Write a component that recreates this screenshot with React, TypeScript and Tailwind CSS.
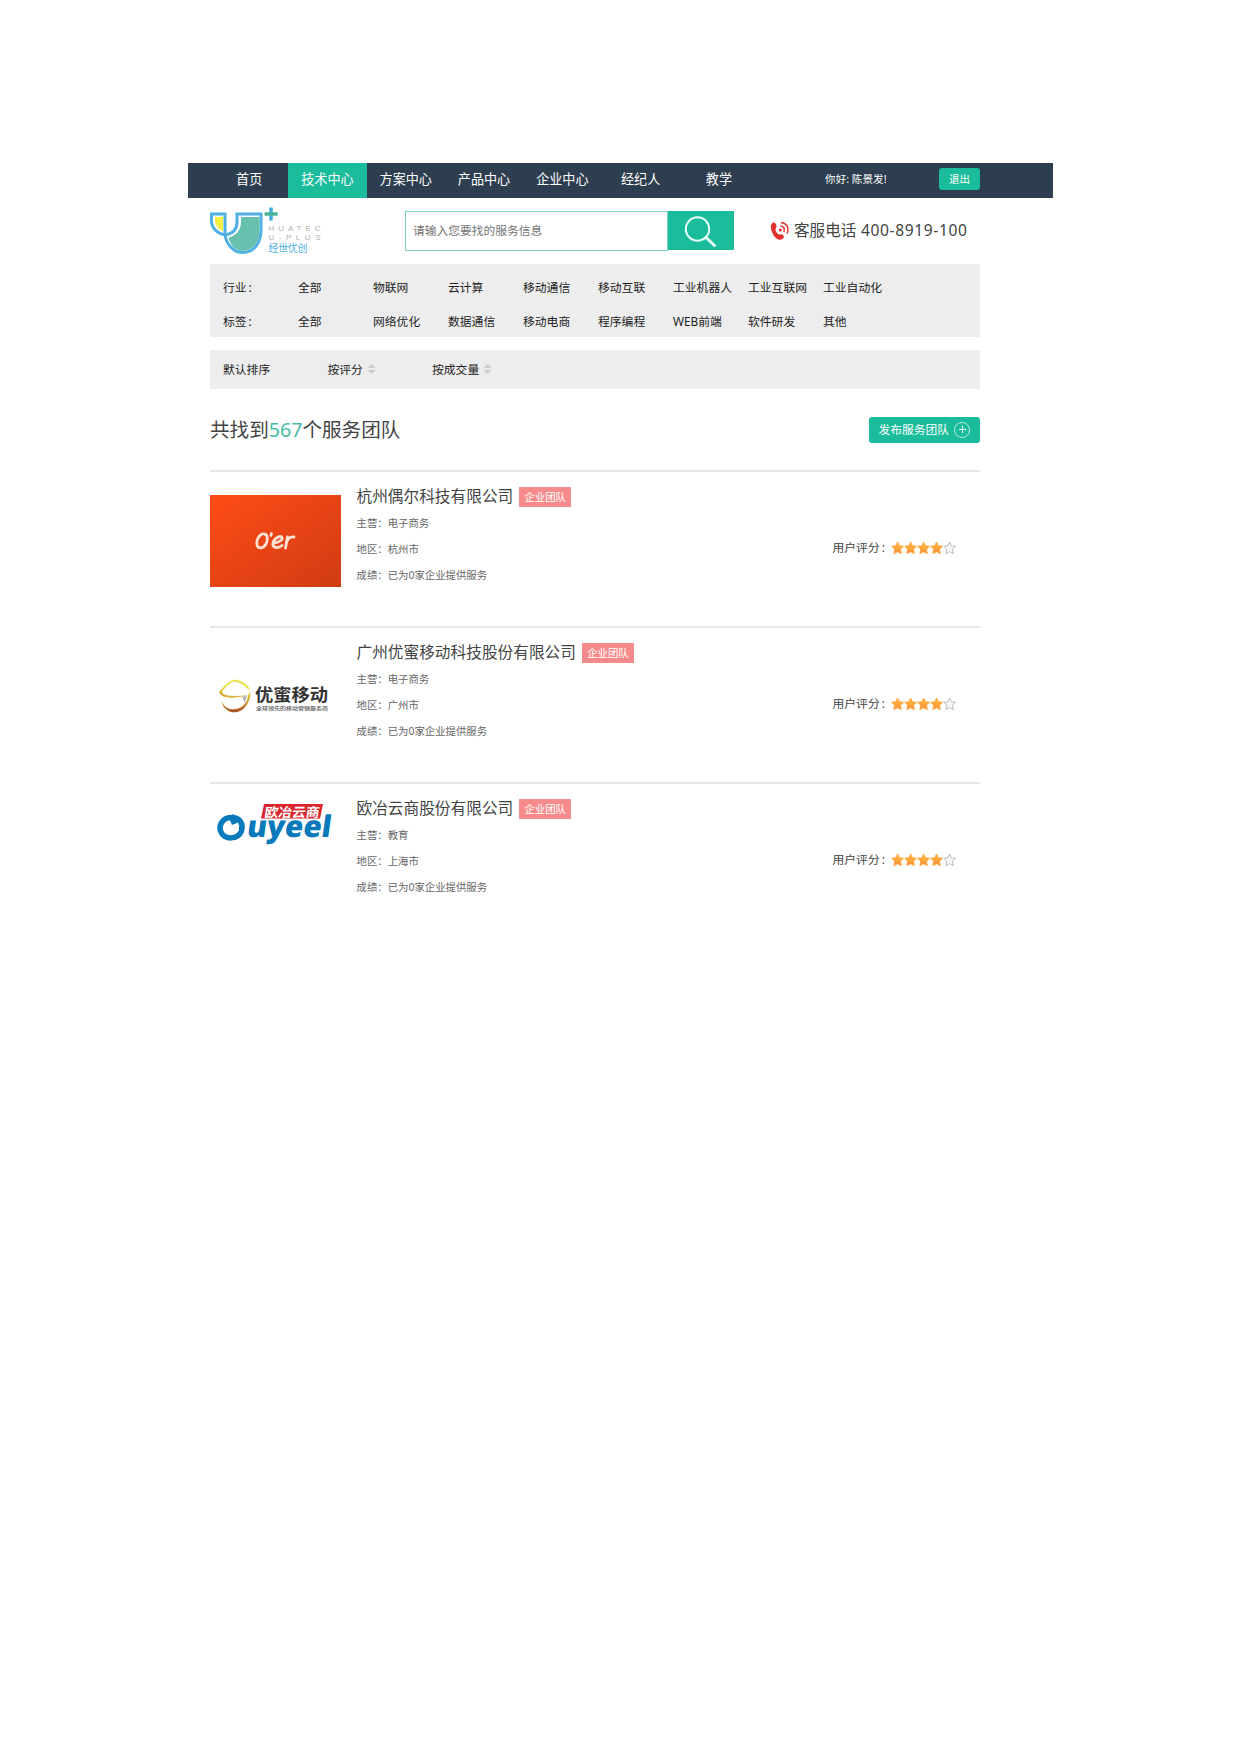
import React from 'react';
import { Plus } from 'lucide-react';

interface Team {
  id: number;
  name: string;
  business: string;
  area: string;
  record: string;
  score: number;
  logo: React.ReactNode;
}

const navItems = ['首页', '技术中心', '方案中心', '产品中心', '企业中心', '经纪人', '教学'];

const filters = [
  { label: '行业:', options: ['全部', '物联网', '云计算', '移动通信', '移动互联', '工业机器人', '工业互联网', '工业自动化'] },
  { label: '标签:', options: ['全部', '网络优化', '数据通信', '移动电商', '程序编程', 'WEB前端', '软件研发', '其他'] },
];

const SiteLogo = () => (
  <svg className="h-[52px] w-[116px]" viewBox="0 0 116 52" fontFamily="'Liberation Sans', sans-serif">
    <path d="M1.500 8H15V29C7 27.500 1.500 22 1.500 15Z" fill="#fff" stroke="#4fb0e2" strokeWidth="3" />
    <path d="M5 11H13V25C8 23 5 19 5 14Z" fill="#f5ee45" />
    <path d="M27 8H51V24C51 37 44 46.500 33 46.500C23 46.500 16.500 38 15 29C22 28 27 24 27 16Z" fill="#fff" stroke="#4fb0e2" strokeWidth="3" />
    <path d="M31 11H49.500V24C49.500 36 43 45 33 45C25 45 20 38 18.500 31.500C26 30 31 24 31 16Z" fill="#67c1ae" />
    <path d="M61 1.500V14.500" stroke="#43ace0" strokeWidth="3.500" />
    <path d="M54.500 8H67.500" stroke="#4db399" strokeWidth="3.500" />
    <text x="58.500" y="25" fontSize="8" fill="#b3b3b3" textLength="52">HUATEC</text>
    <text x="58.500" y="34" fontSize="8" fill="#b3b3b3" textLength="52">U-PLUS</text>
    <text x="58.500" y="46" fontSize="10" fill="#4fb0e2" textLength="39" fontFamily="'Noto Sans CJK SC', sans-serif">经世优创</text>
  </svg>
);

const OerLogo = () => (
  <div className="mt-[23px] flex h-[92px] w-[130.500px] items-center justify-center bg-linear-to-br from-[#ff4c17] to-[#d03c12]">
    <svg className="mt-[2px] ml-[2px] h-[24px] w-[44px]" viewBox="0 0 44 24" fill="none" stroke="#ffe1d3" strokeWidth="2.800" strokeLinecap="round" strokeLinejoin="round">
      <path d="M8 4C4 6 2 11 3 15C4 19 9 19 12 14C14 10 14 4 10 4" />
      <path d="M17.500 3.500L17 5.500" />
      <path d="M19.500 13C24 13 29 10 28 7.500C26.500 5 20 8 19 13C18 18 24 19 28 15.500" />
      <path d="M33.500 7L31.500 18M32.500 12C34.500 8 37 6.500 40 7" />
    </svg>
  </div>
);

const YoumiLogo = () => (
  <svg className="mt-[45px] h-[46px] w-[131px]" viewBox="0 0 131 46" fontFamily="'Noto Sans CJK SC', sans-serif">
    <defs>
      <linearGradient id="youmi" x1="0" y1="0" x2="0" y2="1">
        <stop offset="0" stopColor="#f0e43a" />
        <stop offset="0.500" stopColor="#d9ad3d" />
        <stop offset="1" stopColor="#a84a22" />
      </linearGradient>
    </defs>
    <path d="M10 19C15 14 18 9 24 7.500C30 8 35 11 39 16" fill="none" stroke="#ece045" strokeWidth="1.800" />
    <path d="M9 19C11 26 24 26 38 22C27 23.500 13 23.500 12 19C12 17 14 15 16 13Z" fill="#d8b03d" />
    <path d="M39 16C42 21 40 28 36 33C31 40 22 41 17 37C14 35 12 32 11 28C15 35 20 37 25 36C33 35 37.500 29 38 22C40 20 40 18 39 16Z" fill="url(#youmi)" />
    <path d="M32 24L37 22L35 30Z" fill="#b9b9b9" />
    <text x="45" y="28" fontSize="16.500" fontWeight="700" fill="#333" textLength="73" lengthAdjust="spacingAndGlyphs">优蜜移动</text>
    <text x="46" y="37" fontSize="5" fontWeight="500" fill="#555" textLength="72" lengthAdjust="spacingAndGlyphs">全球领先的移动营销服务商</text>
  </svg>
);

const OuyeelLogo = () => (
  <svg className="mt-[16px] h-[50px] w-[131px]" viewBox="0 0 131 50">
    <path d="M54 4H113L110 18.500H51Z" fill="#d9262f" />
    <text transform="translate(54 16.500) skewX(-8)" fontSize="13" fontWeight="700" fill="#fff" textLength="55" lengthAdjust="spacingAndGlyphs" fontFamily="'Noto Sans CJK SC', sans-serif">欧冶云商</text>
    <path d="M21 17.500C12 18 8 26 11 32C14 40 28 40 31.500 31C33.500 24 30 18 23 17.500M21 15L24.500 24" fill="none" stroke="#0879bb" strokeWidth="5.500" />
    <text transform="translate(36 37) skewX(-8)" fontSize="30" fontWeight="800" fill="#0879bb" textLength="84" lengthAdjust="spacingAndGlyphs" fontFamily="'Open Sans', sans-serif">uyeel</text>
  </svg>
);

const teams: Team[] = [
  { id: 1, name: '杭州偶尔科技有限公司', business: '电子商务', area: '杭州市', record: '已为0家企业提供服务', score: 4, logo: <OerLogo /> },
  { id: 2, name: '广州优蜜移动科技股份有限公司', business: '电子商务', area: '广州市', record: '已为0家企业提供服务', score: 4, logo: <YoumiLogo /> },
  { id: 3, name: '欧冶云商股份有限公司', business: '教育', area: '上海市', record: '已为0家企业提供服务', score: 4, logo: <OuyeelLogo /> },
];

const SortArrows = () => (
  <svg className="ml-1 h-[10px] w-[9px]" viewBox="0 0 9 10" fill="#cccccc">
    <path d="M4.500 0L8.500 4H0.500Z" />
    <path d="M4.500 10L8.500 6H0.500Z" />
  </svg>
);

const Stars = ({ score }: { score: number }) => (
  <div className="flex">
    {[1, 2, 3, 4, 5].map(n => (
      <svg key={n} className="h-[14px] w-[13.200px] shrink-0" viewBox="0 0 13 14">
        <defs>
          <linearGradient id="star" x1="0" y1="0" x2="0" y2="1">
            <stop offset="0" stopColor="#ffc43d" />
            <stop offset="1" stopColor="#ff8a3c" />
          </linearGradient>
        </defs>
        <path
          d="M6.500 1L8.300 4.800L12.400 5.300L9.400 8.200L10.200 12.600L6.500 10.700L2.800 12.600L3.600 8.200L0.600 5.300L4.700 4.800Z"
          fill={n <= score ? 'url(#star)' : '#f6f6f6'}
          stroke={n <= score ? '#ffa83f' : '#bcbcbc'}
          strokeWidth="1"
          strokeLinejoin="round"
        />
      </svg>
    ))}
  </div>
);

const TeamRow = ({ team }: { team: Team }) => (
  <div className="flex h-[156px] items-start border-t-2 border-[#e6e6e6]">
    <div className="w-[146.500px] shrink-0">{team.logo}</div>
    <div className="flex-1 pt-[14px] text-[10.400px] text-[#666]">
      <div className="flex h-[22px] items-center">
        <h3 className="text-[15.680px] text-[#444]">{team.name}</h3>
        <span className="ml-[6px] flex h-[20px] w-[52px] items-center justify-center bg-[#f78b8b] text-[10.400px] text-white">企业团队</span>
      </div>
      <p className="mt-[2px] h-[26px] leading-[26px]">主营：{team.business}</p>
      <p className="h-[26px] leading-[26px]">地区：{team.area}</p>
      <p className="h-[26px] leading-[26px]">成绩：{team.record}</p>
    </div>
    <div className="mt-[65px] flex h-[22px] w-[147px] items-center text-[11.800px] text-[#444]">
      <span className="w-[58px]">用户评分<span className="ml-[2px]">:</span></span>
      <Stars score={team.score} />
    </div>
  </div>
);

const App: React.FC = () => {
  return (
    <div className="min-h-[1753px] w-[1240px] bg-white pt-[163px] font-['Noto_Sans','Noto_Sans_CJK_SC',sans-serif] leading-none">
      {/* Top navigation */}
      <nav className="ml-[188px] flex h-[35px] w-[865px] items-center bg-[#2d3e50] pl-[22px] text-white">
        {navItems.map(item => (
          <a
            key={item}
            className={`flex h-[35px] w-[78.300px] items-center justify-center pb-[2px] text-[13.100px] ${item === '技术中心' ? 'bg-[#1abc9c]' : ''}`}
          >
            {item}
          </a>
        ))}
        <span className="ml-[67px] w-[114px] pb-[3px] text-[10.600px]">你好: 陈景发!</span>
        <button className="mb-[3px] h-[22px] w-[41px] rounded-[3px] bg-[#1abc9c] text-[10.500px]">退出</button>
      </nav>

      <main className="ml-[210px] w-[769.500px]">
        {/* Logo, search and hotline */}
        <header className="flex h-[65.500px] items-start">
          <div className="w-[195px] pt-[8px]"><SiteLogo /></div>
          <div className="mt-[13px] flex h-[40px]">
            <div className="flex w-[262.500px] items-center border border-[#7fd3c2] pl-[7px] text-[11.750px] text-[#757575]">请输入您要找的服务信息</div>
            <button className="flex h-[39px] w-[66px] items-center justify-center bg-[#1abc9c]" aria-label="搜索">
              <svg className="mt-[2px] h-[33px] w-[33px]" viewBox="0 0 33 33" fill="none" stroke="#e8fffa" strokeLinecap="round">
                <circle cx="13.500" cy="14" r="11.700" strokeWidth="2" />
                <path d="M22 22.500L30.500 30.500" strokeWidth="3" />
              </svg>
            </button>
          </div>
          <div className="mt-[22px] ml-[36.500px] flex h-[22px] items-center text-[15.600px] text-[#444]">
            <svg className="mr-[4px] h-[20px] w-[20px]" viewBox="0 0 20 20" fill="none" stroke="#e2302c">
              <path d="M2.500 2C5 0.500 6 3 6.500 5C7 7 5 7.500 5.500 9C6 11 7.500 13 9 13.500C10.500 14 11 12.500 12.500 13.500C14 15 14.500 16.500 13 17.500C10 20 6 18.500 3.500 14C1 10 -0.500 4 2.500 2Z" fill="#e2302c" stroke="none" />
              <circle cx="10.300" cy="9" r="1.500" fill="#e2302c" stroke="none" />
              <path d="M10.500 5C13.500 5 15 7.500 14 11M11 1.800C16.500 1.500 19.500 7 17 12.500" strokeWidth="1.500" />
            </svg>
            <span>客服电话</span>
            <span className="ml-[4.500px] tracking-[0.620px]">400-8919-100</span>
          </div>
        </header>

        {/* Filters */}
        <section className="h-[73.500px] bg-[#ededed] pt-[7px] pl-[13px] text-[11.800px] text-[#222]">
          {filters.map(row => (
            <div key={row.label} className="flex h-[34.500px] items-center">
              <span className="w-[75px]">{row.label.slice(0, 2)}<span className="ml-[2px]">:</span></span>
              {row.options.map(text => (
                <span key={text} className="w-[75px] whitespace-nowrap">{text}</span>
              ))}
            </div>
          ))}
        </section>
        <section className="mt-[13px] flex h-[39px] items-center bg-[#ededed] pl-[13px] text-[11.800px] text-[#222]">
          <span className="w-[104.500px]">默认排序</span>
          <span className="flex w-[104.500px] items-center">按评分<SortArrows /></span>
          <span className="flex items-center">按成交量<SortArrows /></span>
        </section>

        {/* Result count */}
        <div className="flex h-[81px] items-center justify-between">
          <h2 className="text-[19.600px] text-[#444]">
            共找到<span className="text-[#45bda4]">567</span>个服务团队
          </h2>
          <button className="flex h-[26px] w-[110.500px] items-center rounded-[3px] bg-[#1abc9c] pl-[9.500px] text-[11.750px] text-white">
            发布服务团队
            <span className="ml-[5px] flex h-4 w-4 items-center justify-center rounded-full border border-[#b5eadf]">
              <Plus className="h-[11px] w-[11px]" strokeWidth={2} />
            </span>
          </button>
        </div>

        {teams.map(team => (
          <TeamRow key={team.id} team={team} />
        ))}
      </main>
    </div>
  );
};

export default App;
